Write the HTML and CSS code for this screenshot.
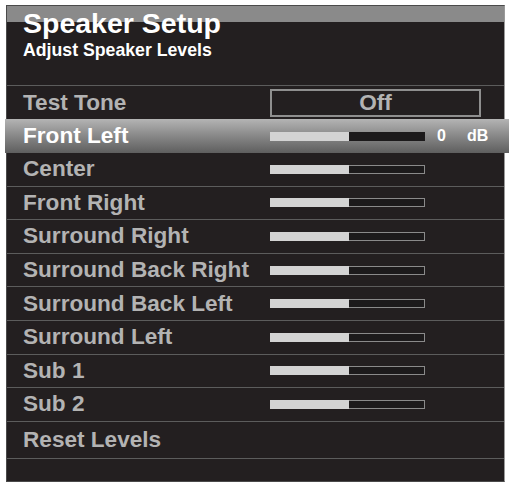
FILE: index.html
```html
<!DOCTYPE html>
<html lang="en">
<head>
    <meta charset="UTF-8">
    <meta name="viewport" content="width=device-width, initial-scale=1.0">
    <link rel="stylesheet" href="styles.css">
</head>
<body>

<div class="panel">
    <div class="header">
        <div class="title">Speaker Setup</div>
        <div class="subtitle">Adjust Speaker Levels</div>
    </div>

    <div class="row test-tone">
        <div class="label">Test Tone</div>
        <div class="toggle">Off</div>
    </div>

    <div class="row selected">
        <div class="label">Front Left</div>
        <div class="level"><div class="fill"></div></div>
        <span class="value">0</span>
        <span class="unit">dB</span>
    </div>
    <div class="row">
        <div class="label">Center</div>
        <div class="level"><div class="fill"></div></div>
    </div>
    <div class="row">
        <div class="label">Front Right</div>
        <div class="level"><div class="fill"></div></div>
    </div>
    <div class="row">
        <div class="label">Surround Right</div>
        <div class="level"><div class="fill"></div></div>
    </div>
    <div class="row">
        <div class="label">Surround Back Right</div>
        <div class="level"><div class="fill"></div></div>
    </div>
    <div class="row">
        <div class="label">Surround Back Left</div>
        <div class="level"><div class="fill"></div></div>
    </div>
    <div class="row">
        <div class="label">Surround Left</div>
        <div class="level"><div class="fill"></div></div>
    </div>
    <div class="row">
        <div class="label">Sub 1</div>
        <div class="level"><div class="fill"></div></div>
    </div>
    <div class="row">
        <div class="label">Sub 2</div>
        <div class="level"><div class="fill"></div></div>
    </div>
    <div class="row reset">
        <div class="label">Reset Levels</div>
    </div>
</div>

</body>
</html>
```

FILE: styles.css
```css
body {
    margin: 0;
    background: #fff;
    font-family: "Liberation Sans", Arial, sans-serif;
}

.panel {
    margin: 5px 0 0 6px;
    width: 499px;
    height: 477px;
    box-sizing: border-box;
    border: 1px solid #4a4a4a;
    border-right-color: #9a9a9a;
    background: #231f20;
}

/* franja gris arriba, el titulo se monta encima */
.header {
    height: 77px;
    border-bottom: 1px solid #5c5c5c;
    padding: 2px 0 0 16px;
    background: linear-gradient(#8a8a8a 0, #8a8a8a 16px, transparent 16px);
}

.title {
    color: #fff;
    font-weight: bold;
    font-size: 28.5px;
    line-height: 30px;
}

.subtitle {
    color: #fff;
    font-weight: bold;
    font-size: 17.7px;
    line-height: 20px;
    margin-top: 2px;
}

.row {
    display: flex;
    align-items: center;
    height: 33.6px;
    box-sizing: border-box;
    border-bottom: 1px solid #5c5c5c;
    padding-left: 16px;
}

.label {
    width: 247px;
    flex: none;
    color: #b3b3b3;
    font-weight: bold;
    font-size: 22.6px;
    white-space: nowrap;
}

.test-tone {
    height: 33px;
    border-bottom: none;
}

.toggle {
    width: 211px;
    height: 28px;
    box-sizing: border-box;
    border: 2px solid #8f8f8f;
    color: #b3b3b3;
    font-weight: bold;
    font-size: 22.6px;
    line-height: 24px;
    text-align: center;
}

.selected {
    height: 34px;
    margin: 0 -5px 0 -2px;
    padding-left: 18px;
    border-bottom: none;
    background: linear-gradient(#b4b4b4, #8c8c8c 45%, #5e5e5e);
}

.selected .label {
    color: #fff;
}

.level {
    width: 155px;
    height: 9px;
    box-sizing: border-box;
    border: 1px solid #8a8a8a;
    background: #1c1a1b;
}

.fill {
    width: 79px;
    height: 9px;
    margin: -1px 0 0 -1px;
    background: #d3d3d3;
}

.selected .level {
    border-color: #1c1a1b;
}

.value,
.unit {
    color: #fff;
    font-weight: bold;
    font-size: 16px;
}

.value {
    margin-left: 12px;
}

.unit {
    margin-left: 21px;
}

.reset {
    height: 37px;
}
```
